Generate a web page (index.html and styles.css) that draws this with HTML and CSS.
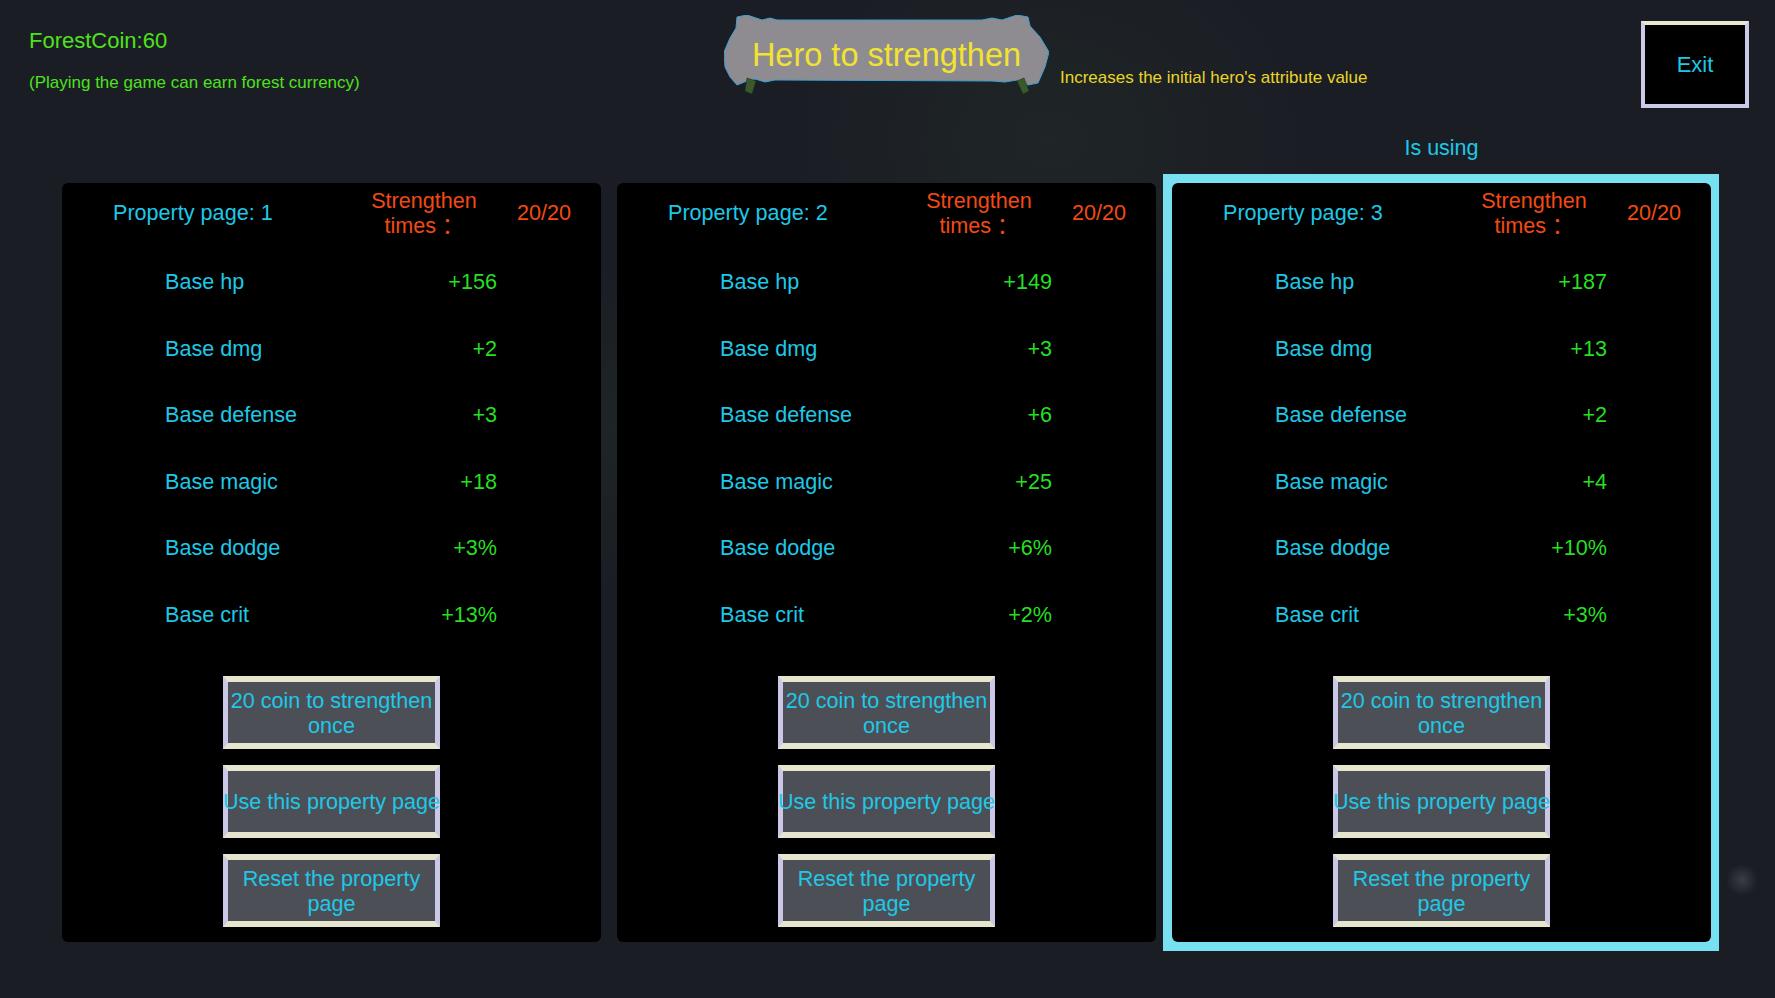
FILE: index.html
```html
<!DOCTYPE html>
<html lang="en">
<head>
  <meta charset="UTF-8">
  <meta name="viewport" content="width=device-width, initial-scale=1.0">
  <title>Hero to strengthen</title>
  <link rel="stylesheet" href="styles.css">
</head>
<body>

<header class="topbar">
  <div class="wallet">
    <div class="coins">ForestCoin:60</div>
    <div class="coins-hint">(Playing the game can earn forest currency)</div>
  </div>

  <div class="banner">
    <svg class="banner-bg" viewBox="0 0 325 80" preserveAspectRatio="none">
      <polygon class="scroll" points="13,2 23,0 38,5 46,3 53,5 258,5 268,3 278,5 293,0 304,2 306,11 316,22 325,37 321,52 314,68 304,70 293,65 281,67 268,66 51,65 41,67 31,64 23,66 13,70 6,62 1,52 0,37 6,23 12,13"/>
      <polygon class="tab" points="23,63 32,66 28,79 21,76"/>
      <polygon class="tab" points="293,66 300,63 305,76 299,79"/>
    </svg>
    <h1 class="banner-title">Hero to strengthen</h1>
  </div>

  <div class="tagline">Increases the initial hero's attribute value</div>

  <button class="exit-btn">Exit</button>
</header>

<main class="board">

  <section class="slot">
    <div class="status"></div>
    <div class="card">
      <div class="card-head">
        <div class="page-no">Property page: 1</div>
        <div class="times-label">Strengthen times ：</div>
        <div class="times-count">20/20</div>
      </div>
      <ul class="stats">
        <li><span>Base hp</span><span class="val">+156</span></li>
        <li><span>Base dmg</span><span class="val">+2</span></li>
        <li><span>Base defense</span><span class="val">+3</span></li>
        <li><span>Base magic</span><span class="val">+18</span></li>
        <li><span>Base dodge</span><span class="val">+3%</span></li>
        <li><span>Base crit</span><span class="val">+13%</span></li>
      </ul>
      <div class="actions">
        <button class="bevel">20 coin to strengthen once</button>
        <button class="bevel nowrap">Use this property page</button>
        <button class="bevel">Reset the property page</button>
      </div>
    </div>
  </section>

  <section class="slot">
    <div class="status"></div>
    <div class="card">
      <div class="card-head">
        <div class="page-no">Property page: 2</div>
        <div class="times-label">Strengthen times ：</div>
        <div class="times-count">20/20</div>
      </div>
      <ul class="stats">
        <li><span>Base hp</span><span class="val">+149</span></li>
        <li><span>Base dmg</span><span class="val">+3</span></li>
        <li><span>Base defense</span><span class="val">+6</span></li>
        <li><span>Base magic</span><span class="val">+25</span></li>
        <li><span>Base dodge</span><span class="val">+6%</span></li>
        <li><span>Base crit</span><span class="val">+2%</span></li>
      </ul>
      <div class="actions">
        <button class="bevel">20 coin to strengthen once</button>
        <button class="bevel nowrap">Use this property page</button>
        <button class="bevel">Reset the property page</button>
      </div>
    </div>
  </section>

  <section class="slot active">
    <div class="status">Is using</div>
    <div class="card">
      <div class="card-head">
        <div class="page-no">Property page: 3</div>
        <div class="times-label">Strengthen times ：</div>
        <div class="times-count">20/20</div>
      </div>
      <ul class="stats">
        <li><span>Base hp</span><span class="val">+187</span></li>
        <li><span>Base dmg</span><span class="val">+13</span></li>
        <li><span>Base defense</span><span class="val">+2</span></li>
        <li><span>Base magic</span><span class="val">+4</span></li>
        <li><span>Base dodge</span><span class="val">+10%</span></li>
        <li><span>Base crit</span><span class="val">+3%</span></li>
      </ul>
      <div class="actions">
        <button class="bevel">20 coin to strengthen once</button>
        <button class="bevel nowrap">Use this property page</button>
        <button class="bevel">Reset the property page</button>
      </div>
    </div>
  </section>

</main>

</body>
</html>
```

FILE: styles.css
```css
body {
  margin: 0;
  padding: 0;
  min-height: 998px;
  font-family: "Liberation Sans", Arial, "Noto Sans CJK SC", sans-serif;
  background-color: #1b1d24;
  background-image:
    radial-gradient(circle at 1742px 880px, rgba(72, 74, 82, 0.7), rgba(27, 29, 36, 0) 16px),
    radial-gradient(ellipse at 620px 430px, rgba(40, 60, 40, 0.25), rgba(27, 29, 36, 0) 320px),
    radial-gradient(ellipse at 1050px 140px, rgba(40, 58, 44, 0.3), rgba(27, 29, 36, 0) 260px);
  overflow: hidden;
}

/* top bar */
.topbar {
  display: flex;
  align-items: flex-start;
  height: 120px;
  padding: 0 26px 0 29px;
}
.wallet {
  width: 695px;
  padding-top: 28px;
}
.coins {
  font-size: 22px;
  line-height: 26px;
  color: #4ee21e;
}
.coins-hint {
  margin-top: 19px;
  font-size: 17px;
  line-height: 20px;
  color: #4ee21e;
}
.banner {
  position: relative;
  width: 325px;
  height: 80px;
  margin-top: 15px;
}
.banner-bg {
  position: absolute;
  left: 0;
  top: 0;
  width: 100%;
  height: 100%;
}
.banner-bg .scroll {
  fill: #8e8c90;
  stroke: #3b9fd8;
  stroke-width: 1;
}
.banner-bg .tab {
  fill: #3a5a2c;
  stroke: #1f3418;
  stroke-width: 0.6;
}
.banner-title {
  position: relative;
  margin: 0;
  font-size: 32.5px;
  font-weight: normal;
  line-height: 80px;
  text-align: center;
  color: #f2e232;
}
.tagline {
  margin: 68px 0 0 11px;
  font-size: 17px;
  line-height: 20px;
  color: #e8d628;
}
.exit-btn {
  margin: 21px 0 0 auto;
  width: 108px;
  height: 87px;
  box-sizing: border-box;
  border-style: solid;
  border-width: 4px;
  border-color: #e8e8d2 #cdc9e8 #cdc9e8 #cdc9e8;
  background: #000;
  color: #1ec8e6;
  font-family: inherit;
  font-size: 22px;
  padding: 0;
}

/* property pages */
.board {
  display: grid;
  grid-template-columns: repeat(3, 539px);
  column-gap: 16px;
  padding-left: 62px;
}
.slot {
  display: flex;
  flex-direction: column;
}
.status {
  height: 56px;
  padding-bottom: 7px;
  display: flex;
  align-items: center;
  justify-content: center;
  font-size: 21.5px;
  color: #1ec8e6;
}
.card {
  position: relative;
  height: 759px;
  box-sizing: border-box;
  display: flex;
  flex-direction: column;
  background: #000;
  border-radius: 6px;
  padding-bottom: 15px;
}
.active .card::before {
  content: "";
  position: absolute;
  top: -9px;
  right: -8px;
  bottom: -9px;
  left: -9px;
  background: #78e0f0;
  z-index: -1;
}
.card-head {
  display: flex;
  align-items: center;
  height: 50px;
  padding: 5px 0 0 51px;
  font-size: 21.6px;
}
.page-no {
  width: 256px;
  color: #1ec8e6;
}
.times-label {
  width: 110px;
  line-height: 25px;
  text-align: center;
  color: #f24a14;
}
.times-count {
  margin-left: 38px;
  color: #f24a14;
}
.stats {
  list-style: none;
  margin: 11px 0 0;
  padding: 0 104px 0 103px;
}
.stats li {
  display: flex;
  align-items: center;
  justify-content: space-between;
  height: 66.5px;
  font-size: 21.6px;
  color: #1ec8e6;
}
.stats .val {
  color: #26df22;
}
.actions {
  margin-top: auto;
  display: flex;
  flex-direction: column;
  align-items: center;
  gap: 16px;
}
.bevel {
  display: flex;
  align-items: center;
  justify-content: center;
  width: 217px;
  height: 73px;
  box-sizing: border-box;
  padding: 0;
  border-style: solid;
  border-width: 6px 5px;
  border-color: #e6e6ce #cbc7e6;
  background: #4d4f57;
  color: #1ec8e6;
  font-family: inherit;
  font-size: 21.6px;
  line-height: 25px;
  text-align: center;
}
.nowrap {
  white-space: nowrap;
}
```
